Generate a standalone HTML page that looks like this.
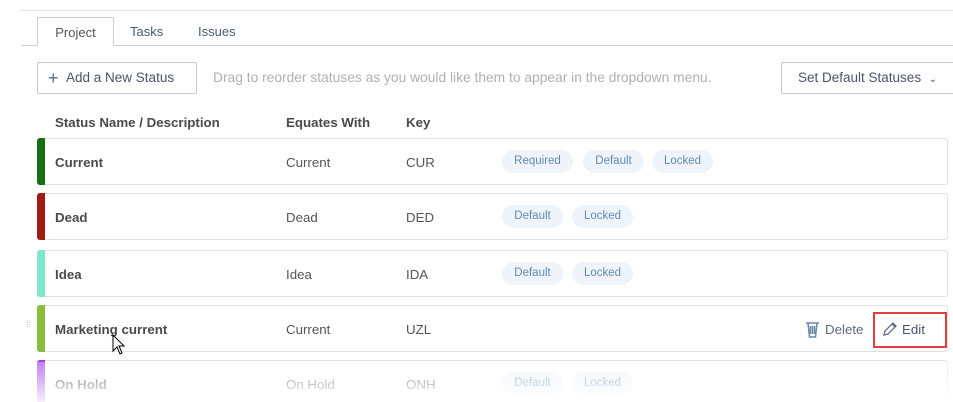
<!DOCTYPE html>
<html style="height:402px;overflow:hidden"><head><meta charset="utf-8"><style>
*{box-sizing:border-box;margin:0;padding:0}
body{width:953px;height:402px;background:#fff;font-family:"Liberation Sans",sans-serif;position:relative;overflow:hidden;color:#4a4a4a}
.abs{position:absolute}
.topline{left:20px;top:10px;width:933px;height:1px;background:#e4e4e4}
.tabline{left:21px;top:45px;width:932px;height:1px;background:#cfcfcf}
.tab{top:17px;height:29px;font-size:13px;color:#4d5a6e;line-height:29px}
.ptab{left:37px;width:77px;border:1px solid #cfcfcf;border-bottom:1px solid #fff;text-align:center;background:#fff;color:#555}
.btn{top:62px;height:32px;border:1px solid #c8c8c8;border-radius:2px;font-size:13.5px;color:#4a5568;line-height:30px}
.hint{left:213px;top:62px;line-height:32px;font-size:13.8px;color:#b0b0b0}
.hdr{top:115px;font-size:13.3px;font-weight:bold;color:#4a4a4a}
.row{left:37px;width:911px;height:47px;border:1px solid #e2e2e2;border-left:none;border-radius:3px;background:#fff}
.bar{position:absolute;left:0;top:-1px;bottom:-1px;width:8px;border-radius:3px 0 0 3px}
.row span{position:absolute;top:0;line-height:47px;font-size:13.3px;color:#555}
.row .n{left:18px;font-weight:bold;color:#4a4a4a}
.row .e{left:249px}.row .k{left:369px}
.chip{position:absolute;top:11px;height:23px;line-height:23px;border-radius:12px;background:#eef4f9;color:#5f8bb5;font-size:11.5px;text-align:center}
</style></head><body>
<div class="abs topline"></div>
<div class="abs tabline"></div>
<div class="abs tab ptab">Project</div>
<div class="abs tab" style="left:130px">Tasks</div>
<div class="abs tab" style="left:198px">Issues</div>
<div class="abs btn" style="left:37px;width:160px;padding-left:10px"><span style="font-size:18px;color:#5a6b85;vertical-align:-2px">+</span>&nbsp;&nbsp;Add a New Status</div>
<div class="abs hint">Drag to reorder statuses as you would like them to appear in the dropdown menu.</div>
<div class="abs btn" style="left:781px;width:180px;padding-left:16px">Set Default Statuses&nbsp;&nbsp;<span style="font-size:10px">&#8964;</span></div>
<div class="abs hdr" style="left:55px">Status Name / Description</div>
<div class="abs hdr" style="left:286px">Equates With</div>
<div class="abs hdr" style="left:406px">Key</div>

<div class="abs row" style="top:138px"><div class="bar" style="background:#176f11"></div><span class="n">Current</span><span class="e">Current</span><span class="k">CUR</span>
<div class="chip" style="left:465px;width:71px">Required</div><div class="chip" style="left:546px;width:61px">Default</div><div class="chip" style="left:615px;width:61px">Locked</div></div>

<div class="abs row" style="top:193px"><div class="bar" style="background:#a01c10"></div><span class="n">Dead</span><span class="e">Dead</span><span class="k">DED</span>
<div class="chip" style="left:465px;width:61px">Default</div><div class="chip" style="left:535px;width:61px">Locked</div></div>

<div class="abs row" style="top:250px"><div class="bar" style="background:#7de8c9"></div><span class="n">Idea</span><span class="e">Idea</span><span class="k">IDA</span>
<div class="chip" style="left:465px;width:61px">Default</div><div class="chip" style="left:535px;width:61px">Locked</div></div>

<div class="abs" style="left:26px;top:322px;font-size:9px;color:#bbb;line-height:4px">⁞⁞</div>
<div class="abs row" style="top:305px"><div class="bar" style="background:#8bbd3c"></div><span class="n">Marketing current</span><span class="e">Current</span><span class="k">UZL</span>
<svg style="position:absolute;left:768px;top:15px" width="15" height="17" viewBox="0 0 15 17"><path d="M1 2h13M3 2l1.5 14h6L12 2M5.5 5v8M7.5 5v8M9.5 5v8" stroke="#6a88a8" stroke-width="1.5" fill="none"/></svg>
<span style="left:788px;color:#5a6b85">Delete</span>
<svg style="position:absolute;left:845px;top:15px" width="16" height="16" viewBox="0 0 16 16"><path d="M2 14l1-4L11 2l3 3-8 8z M10 3l3 3" stroke="#5a6b85" stroke-width="1.3" fill="none"/></svg>
<span style="left:865px;color:#4a5568">Edit</span>
<div style="position:absolute;left:836px;top:6px;width:74px;height:36px;border:2px solid #e0413e"></div>
</div>
<svg class="abs" style="left:112px;top:334px" width="14" height="21" viewBox="0 0 14 21"><path d="M1 1v16l4-4 3 7 2-1-3-7h5z" fill="#fff" stroke="#000" stroke-width="1"/></svg>

<div class="abs row" style="top:360px"><div class="bar" style="background:#a040e8"></div><span class="n">On Hold</span><span class="e">On Hold</span><span class="k">ONH</span>
<div class="chip" style="left:465px;width:61px">Default</div><div class="chip" style="left:535px;width:61px">Locked</div></div>
<div class="abs" style="left:0;top:362px;width:953px;height:40px;background:linear-gradient(rgba(255,255,255,0.35),rgba(255,255,255,0.92))"></div>
</body></html>
